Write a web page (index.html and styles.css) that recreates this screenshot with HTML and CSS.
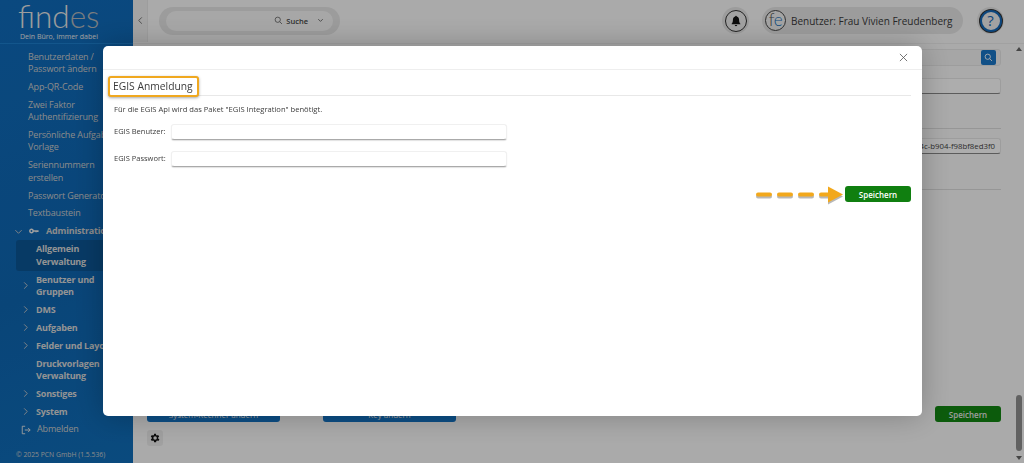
FILE: index.html
```html
<!DOCTYPE html>
<html lang="de">
<head>
<meta charset="utf-8">
<title>EGIS Anmeldung</title>
<link rel="stylesheet" href="styles.css">
</head>
<body>
<div class="app">
  <aside class="sidebar">
    <div class="brand">
      <div class="logo"><span class="logo-a">find</span><span class="logo-b">es</span></div>
      <div class="slogan">Dein Büro, immer dabei</div>
    </div>
    <nav class="menu">
      <a class="item">Benutzerdaten /<br>Passwort ändern</a>
      <a class="item">App-QR-Code</a>
      <a class="item">Zwei Faktor<br>Authentifizierung</a>
      <a class="item">Persönliche Aufgaben<br>Vorlage</a>
      <a class="item">Seriennummern<br>erstellen</a>
      <a class="item">Passwort Generator</a>
      <a class="item">Textbaustein</a>
      <a class="item group">
        <svg class="chev chev-open" viewBox="0 0 10 10"><path d="M1.5 3.5 5 7l3.5-3.5"/></svg>
        <svg class="key" viewBox="0 0 12 8"><circle cx="3" cy="4" r="2" fill="none" stroke-width="1.8"/><path d="M5 4h6.500M8.500 4v1.600M10.500 4v1.200" fill="none" stroke-width="1.800"/></svg>
        <b>Administration</b>
      </a>
      <a class="sub active"><b>Allgemein<br>Verwaltung</b></a>
      <a class="sub"><svg class="chev" viewBox="0 0 10 10"><path d="M3.500 1.500 7 5 3.500 8.500"/></svg><b>Benutzer und<br>Gruppen</b></a>
      <a class="sub"><svg class="chev" viewBox="0 0 10 10"><path d="M3.500 1.500 7 5 3.500 8.500"/></svg><b>DMS</b></a>
      <a class="sub"><svg class="chev" viewBox="0 0 10 10"><path d="M3.500 1.500 7 5 3.500 8.500"/></svg><b>Aufgaben</b></a>
      <a class="sub"><svg class="chev" viewBox="0 0 10 10"><path d="M3.500 1.500 7 5 3.500 8.500"/></svg><b>Felder und Layout</b></a>
      <a class="sub"><b>Druckvorlagen<br>Verwaltung</b></a>
      <a class="sub"><svg class="chev" viewBox="0 0 10 10"><path d="M3.500 1.500 7 5 3.500 8.500"/></svg><b>Sonstiges</b></a>
      <a class="sub"><svg class="chev" viewBox="0 0 10 10"><path d="M3.500 1.500 7 5 3.500 8.500"/></svg><b>System</b></a>
      <a class="logout">
        <svg class="logout-icon" viewBox="0 0 12 12"><path d="M5 1.500H1.500v9H5M4.500 6h6.500M8.500 3.500 11 6 8.500 8.500"/></svg>
        Abmelden
      </a>
    </nav>
    <div class="copyright">© 2025 PCN GmbH (1.5.536)</div>
  </aside>

  <main class="main">
    <header class="topbar">
      <button class="collapse"><svg viewBox="0 0 10 10"><path d="M6.500 1.500 3 5l3.500 3.500"/></svg></button>
      <div class="search-wrap">
        <div class="search">
          <svg class="search-icon" viewBox="0 0 12 12"><circle cx="5" cy="5" r="3.500"/><path d="m7.700 7.700 3 3"/></svg>
          <span>Suche</span>
          <svg class="search-chev" viewBox="0 0 10 10"><path d="M2.500 3.500 5 6l2.500-2.500"/></svg>
        </div>
      </div>
      <div class="round-wrap">
        <div class="round"><svg class="bell" viewBox="0 0 12 12"><path d="M6 .8c-.5 0-.8.300-.8.800-1.600.4-2.300 1.700-2.300 3.300 0 1.900-.5 3-1.300 3.800v.6h8.800v-.6c-.8-.8-1.300-1.900-1.300-3.800 0-1.600-.7-2.900-2.300-3.300 0-.5-.3-.8-.8-.8zM4.800 10c0 .7.500 1.200 1.200 1.200s1.200-.5 1.200-1.200z"/></svg></div>
      </div>
      <div class="user">
        <div class="fe"><span class="fe-f">f</span><span class="fe-e">e</span></div>
        <span class="user-name">Benutzer: Frau Vivien Freudenberg</span>
      </div>
      <div class="round-wrap help-wrap">
        <div class="round help">?</div>
      </div>
    </header>

    <section class="content">
      <div class="field-row first-row">
        <div class="bg-input search-input"><span class="search-btn"><svg viewBox="0 0 12 12"><circle cx="5" cy="5" r="3.500"/><path d="m7.700 7.700 3 3"/></svg></span></div>
      </div>
      <div class="field-row"><div class="bg-input plain"></div></div>
      <hr class="rule rule-one">
      <div class="field-row"><div class="bg-input uuid">4c-b904-f98bf8ed3f0</div></div>
      <hr class="rule rule-two">
      <div class="spacer"></div>
      <div class="actions">
        <button class="blue-btn">System-Rechner ändern</button>
        <button class="blue-btn">Key ändern</button>
        <button class="save-btn bg-save">Speichern</button>
      </div>
      <button class="gear">
        <svg viewBox="0 0 24 24"><path d="M19.400 13a7.500 7.500 0 0 0 0-2l2.100-1.600-2-3.500-2.500 1a7.500 7.500 0 0 0-1.700-1L15.400 3.300h-4l-.4 2.600a7.500 7.500 0 0 0-1.700 1l-2.500-1-2 3.500L6.900 11a7.500 7.500 0 0 0 0 2l-2.100 1.600 2 3.500 2.500-1a7.500 7.500 0 0 0 1.700 1l.4 2.600h4l.4-2.600a7.500 7.500 0 0 0 1.700-1l2.500 1 2-3.500zM13.400 15.500a3.500 3.500 0 1 1 0-7 3.500 3.500 0 0 1 0 7z" transform="translate(-1.200 0)"/></svg>
      </button>
    </section>

    <div class="scrollbar">
      <span class="arrow-up"></span>
      <span class="thumb"></span>
      <span class="arrow-down"></span>
    </div>
  </main>
</div>

<div class="backdrop">
  <div class="modal">
    <div class="modal-head">
      <svg class="close" viewBox="0 0 10 10"><path d="m1 1 8 8M9 1l-8 8"/></svg>
    </div>
    <div class="modal-body">
      <div class="title-row"><h2 class="title">EGIS Anmeldung</h2></div>
      <p class="note">Für die EGIS Api wird das Paket "EGIS Integration" benötigt.</p>
      <div class="form-row"><label class="label">EGIS Benutzer:</label><div class="input"></div></div>
      <div class="form-row"><label class="label">EGIS Passwort:</label><div class="input"></div></div>
      <div class="modal-actions">
        <svg class="callout" viewBox="0 0 88 24">
          <g class="callout-shadow">
            <path d="M2 14.500h12M23 14.500h12M44 14.500h12"/>
            <path d="M65 14.500h9"/>
            <path class="head" d="M72 6.500l15 8-15 8z"/>
          </g>
          <g class="callout-line">
            <path d="M2 12.500h12M23 12.500h12M44 12.500h12"/>
            <path d="M65 12.500h9"/>
            <path class="head" d="M72 4.500l15 8-15 8z"/>
          </g>
        </svg>
        <button class="save-btn">Speichern</button>
      </div>
    </div>
  </div>
</div>
</body>
</html>
```
FILE: styles.css
```css
* { box-sizing: border-box; }
html, body { margin: 0; height: 100%; overflow: hidden; }
body { font-family: "Open Sans", "Noto Sans", sans-serif; color: #333; background: #fafafa; }
button { font-family: inherit; border: 0; padding: 0; }
svg { display: block; }

.app { display: flex; height: 463px; }

/* Sidebar */
.sidebar {
  width: 133px; flex: none; display: flex; flex-direction: column;
  background: linear-gradient(160deg, #0f6cbc 0%, #0e66b2 60%, #0f6eba 100%);
  color: #d8d8d8; overflow: hidden;
}
.brand { height: 44px; flex: none; border-bottom: 1px solid #1c7fce; padding: 1px 0 0 18px; }
.logo { font-family: "Lato", sans-serif; font-weight: 300; font-size: 31.500px; line-height: 31px; height: 31px; }
.logo-a { color: #e8e8e8; }
.logo-b { color: #b4b8bc; }
.slogan { font-size: 7px; line-height: 9px; color: #ececec; white-space: nowrap; margin-left: 2px; }

.menu { display: flex; flex-direction: column; padding-top: 4px; font-size: 9px; line-height: 12.500px; letter-spacing: -.15px; white-space: nowrap; }
.item { display: flex; align-items: center; padding: 2.650px 0 2.650px 28px; color: #cdcdcd; flex-wrap: wrap; }
.item.group { padding-left: 14px; }
.item.group b { margin-left: 7px; }
.sub { position: relative; display: block; padding: 2.650px 0 2.650px 36px; color: #dadada; }
.sub.active { background: #0b5696; border-radius: 3px; margin-left: 16px; padding: 3px 0 3px 20px; }
b { font-weight: 700; letter-spacing: -.2px; }
.chev { width: 9px; height: 9px; fill: none; stroke: #cacaca; stroke-width: 1; }
.sub .chev { position: absolute; left: 21px; top: 50%; margin-top: -5px; }
.chev-open { margin-right: 6px; }
.key { width: 10px; height: 8px; stroke: #ececec; fill: none; }
.logout { display: flex; align-items: center; gap: 6px; padding: 2.650px 0 2.650px 21px; color: #cdcdcd; }
.logout-icon { width: 10px; height: 10px; fill: none; stroke: #e8e8e8; stroke-width: 1.100; }
.copyright { margin-top: auto; padding: 0 0 3px 16px; font-size: 6.800px; line-height: 10px; color: #cdcdcd; white-space: nowrap; }

/* Main */
.main { flex: 1; min-width: 0; display: flex; flex-direction: column; position: relative; background: #fbfbfb; }
.topbar { height: 44px; flex: none; display: flex; align-items: center; border-bottom: 1px solid #eee; padding: 0 20px 2px 0; }
.collapse { width: 15px; height: 42px; background: #f1f1f1; border-right: 1px solid #e8e8e8; display: flex; align-items: center; justify-content: center; }
.collapse svg { width: 9px; height: 9px; fill: none; stroke: #666; stroke-width: 1; }
.search-wrap { margin-left: 11px; width: 181px; height: 28px; background: #e6e6e6; border-radius: 14px; padding: 4px 7px; }
.search { height: 20px; background: #f7f7f7; border-radius: 10px; display: flex; align-items: center; justify-content: flex-end; gap: 3px; padding-right: 8px; font-size: 7.500px; font-weight: 600; color: #444; }
.search-icon { width: 9px; height: 9px; fill: none; stroke: #555; stroke-width: 1; }
.search-chev { width: 9px; height: 9px; fill: none; stroke: #666; stroke-width: 1; margin-left: 5px; }
.round-wrap { width: 27px; height: 27px; border-radius: 50%; background: #e6e6e6; display: flex; align-items: center; justify-content: center; margin-left: auto; }
.help-wrap { margin-left: 14px; }
.round { width: 22px; height: 22px; border: 1px solid #333; border-radius: 50%; display: flex; align-items: center; justify-content: center; background: #efefef; }
.bell { width: 12px; height: 12px; fill: #111; }
.help { border: 2px solid #1368b8; box-shadow: 0 0 0 1px #333; font-size: 15px; line-height: 1; font-weight: 400; color: #1368b8; }
.user { margin-left: 13px; width: 201px; height: 27px; border-radius: 14px; background: #e6e6e6; display: flex; align-items: center; gap: 5px; padding-left: 3px; }
.fe { width: 21px; height: 21px; border: 1px solid #444; border-radius: 50%; background: #f2f2f2; text-align: center; font-size: 17px; line-height: 17px; font-family: "Lato", sans-serif; font-weight: 300; letter-spacing: -.5px; white-space: nowrap; }
.fe-f { color: #555; }
.fe-e { color: #1670bb; }
.user-name { font-size: 10px; color: #3a3a3a; white-space: nowrap; }

.content { flex: 1; min-height: 0; display: flex; flex-direction: column; padding: 5px 23px 17px 14px; }
.field-row { display: flex; justify-content: flex-end; }
.first-row { margin-bottom: 12px; }
.bg-input { width: 300px; height: 16px; border-radius: 3px; background: #fff; border: 1px solid #e8e8e8; border-bottom-color: #888; }
.search-input { height: 17px; display: flex; justify-content: flex-end; padding-right: 4px; border-bottom-color: #e8e8e8; background: #f5f5f5; }
.search-btn { width: 15px; height: 15px; background: #1a76c8; border-radius: 2px; display: flex; align-items: center; justify-content: center; }
.search-btn svg { width: 9px; height: 9px; fill: none; stroke: #fff; stroke-width: 1.200; }
.rule { width: 100%; border: 0; border-top: 1px solid #ddd; margin: 0; }
.rule-one { margin: 34px 0 9px; }
.rule-two { margin-top: 35px; }
.uuid { font-size: 7.800px; line-height: 14px; text-align: right; padding-right: 5px; color: #444; white-space: nowrap; overflow: hidden; }
.spacer { flex: 1; }
.actions { display: flex; align-items: center; }
.blue-btn { width: 133px; height: 16px; background: #1273c4; border-radius: 3px; color: #eee; font-size: 8px; margin-right: 43px; }
.save-btn { width: 66px; height: 16px; background: #107f10; border-radius: 3px; color: #fff; font-size: 8px; font-weight: 600; flex: none; }
.bg-save { margin-left: auto; background: #128712; color: #e8e8e8; }
.gear { width: 16px; height: 16px; margin-top: 8px; background: #ececec; border-radius: 3px; display: flex; align-items: center; justify-content: center; }
.gear svg { width: 12px; height: 12px; fill: #111; }

.scrollbar { position: absolute; right: 2px; top: 44px; bottom: 0; width: 6px; }
.arrow-up { position: absolute; top: 3px; left: 0; border: 3px solid transparent; border-top: 0; border-bottom: 4px solid #666; }
.thumb { position: absolute; left: 0; bottom: 12px; width: 6px; height: 56px; border-radius: 3px; background: #909090; }
.arrow-down { position: absolute; bottom: 3px; left: 0; border: 3px solid transparent; border-bottom: 0; border-top: 4px solid #666; }

/* Modal */
.backdrop { position: fixed; inset: 0; background: rgba(0, 0, 0, .32); display: flex; padding: 46px 102px 47px 103px; }
.modal { flex: 1; background: #fff; border-radius: 5px; box-shadow: 0 0 30px rgba(0, 0, 0, .25); display: flex; flex-direction: column; }
.modal-head { height: 24px; flex: none; border-bottom: 1px solid #eee; display: flex; align-items: center; justify-content: flex-end; padding-right: 14px; }
.close { width: 9px; height: 9px; fill: none; stroke: #555; stroke-width: .9; }
.modal-body { padding: 6px 11px 0 5px; }
.title-row { display: flex; align-items: flex-start; border-bottom: 1px solid #e8e8e8; height: 20px; }
.title { margin: 0; height: 21px; padding: 0 4px 0 3px; font-size: 10.300px; line-height: 17px; font-weight: 400; color: #3c3c3c; border: 2px solid #f0a81f; border-radius: 3px; background: #fff; box-shadow: 0 1px 3px rgba(0, 0, 0, .35); white-space: nowrap; }
.note { margin: 8px 0 0 6px; font-size: 7.600px; line-height: 10px; color: #3c3c3c; white-space: nowrap; }
.form-row { display: flex; align-items: center; margin-top: 10px; padding-left: 6px; }
.form-row + .form-row { margin-top: 11px; }
.label { width: 57px; flex: none; padding-bottom: 2px; font-size: 7.500px; color: #3c3c3c; white-space: nowrap; }
.input { width: 336px; height: 16px; background: #fff; border: 1px solid #f0f0f0; border-bottom-color: #aaa; border-radius: 3px; box-shadow: 0 1px 1px rgba(0, 0, 0, .12); }
.modal-actions { display: flex; justify-content: flex-end; align-items: center; margin-top: 15px; gap: 1px; }
.callout { width: 88px; height: 24px; fill: none; }
.callout-shadow { stroke: rgba(0, 0, 0, .28); stroke-width: 4; stroke-linecap: round; }
.callout-line { stroke: #f2a81c; stroke-width: 4; stroke-linecap: round; }
.callout-shadow .head { fill: rgba(0, 0, 0, .28); stroke: none; }
.callout-line .head { fill: #f2a81c; stroke: none; }
```
